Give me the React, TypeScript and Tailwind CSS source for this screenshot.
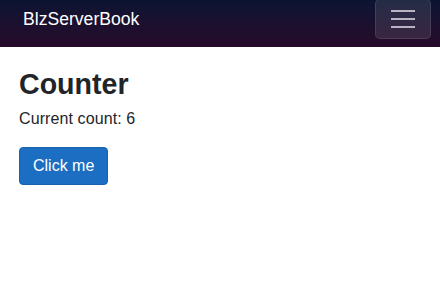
import { useState } from "react";

export default function App() {
  const [count, setCount] = useState(6);

  return (
    <div className="w-[440px] h-[285px] bg-white text-[#212529] font-['Liberation_Sans',Arial,sans-serif] overflow-hidden">
      <header className="h-[47px] flex items-start justify-between bg-gradient-to-b from-[#0b1433] to-[#260a2a]">
        <a className="ml-[23px] mt-[6px] text-[17.6px] leading-[1.5] text-white">BlzServerBook</a>
        <button className="mr-[9px] -mt-px w-[56px] h-[40px] rounded-[5px] border border-white/10 bg-white/10 flex flex-col items-center justify-center gap-[6px]">
          <span className="block w-[24px] h-[2px] bg-[#b9b4c4]" />
          <span className="block w-[24px] h-[2px] bg-[#b9b4c4]" />
          <span className="block w-[24px] h-[2px] bg-[#b9b4c4]" />
        </button>
      </header>

      <main className="px-[19px] pt-[20px]">
        <h1 className="text-[28.6px] leading-[1.2] font-bold mb-[6px]">Counter</h1>
        <p className="text-base leading-6 mb-4 tracking-[0.1px]">Current count: {count}</p>
        <button
          onClick={() => setCount(count + 1)}
          className="px-[13px] py-1.5 text-base leading-6 text-white bg-[#1b6ec2] border border-[#1861ac] rounded"
        >
          Click me
        </button>
      </main>
    </div>
  );
}
